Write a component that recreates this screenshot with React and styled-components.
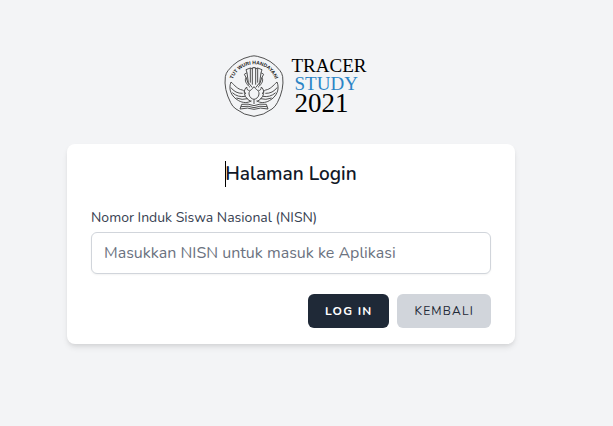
import React, { useState } from "react";
import styled, { createGlobalStyle } from "styled-components";

const GlobalStyle = createGlobalStyle`
  *, *::before, *::after {
    box-sizing: border-box;
  }
  body {
    margin: 0;
    background-color: #f3f4f6;
    color: #111827;
    font-family: Nunito, Lato, "Open Sans", sans-serif;
    font-size: 16px;
    line-height: 24px;
  }
`;

const Container = styled.main`
  display: flex;
  flex-direction: column;
  align-items: center;
  min-height: 100vh;
  padding: 55px 31px 24px 0;
`;

const Brand = styled.a`
  display: flex;
  align-items: flex-start;
  gap: 8px;
  margin-left: 8px;
  color: #000000;
  text-decoration: none;
`;

const BrandText = styled.div`
  display: flex;
  flex-direction: column;
  font-family: "Liberation Serif", serif;
  font-size: 19px;
  line-height: 18px;
  padding-top: 2px;
`;

const BrandLine = styled.span`
  padding-left: ${(props) => (props.$indent ? "3px" : "0")};
  color: ${(props) => props.$color || "#000000"};
`;

const Year = styled(BrandLine)`
  font-size: 27px;
  line-height: 21px;
`;

const Card = styled.form`
  width: 100%;
  max-width: 448px;
  margin-top: 27px;
  padding: 16px 24px;
  background-color: #ffffff;
  border-radius: 8px;
  box-shadow: 0 4px 6px -1px rgb(0 0 0 / 10%), 0 2px 4px -1px rgb(0 0 0 / 6%);
`;

const Title = styled.h1`
  position: relative;
  width: fit-content;
  margin: 0 auto 18px;
  font-size: 19px;
  font-weight: 600;
  line-height: 28px;
  &::before {
    content: "";
    position: absolute;
    top: 1px;
    left: 0;
    width: 1px;
    height: 26px;
    background-color: #000000;
  }
`;

const Label = styled.label`
  display: block;
  font-size: 14px;
  line-height: 24px;
  color: #374151;
`;

const Input = styled.input`
  display: block;
  width: 100%;
  height: 42px;
  margin-top: 2px;
  padding: 8px 12px;
  font: inherit;
  color: #111827;
  background-color: #ffffff;
  border: 1px solid #d1d5db;
  border-radius: 6px;
  box-shadow: 0 1px 2px 0 rgb(0 0 0 / 5%);
  outline: none;
  &::placeholder {
    color: #6b7280;
    opacity: 1;
  }
`;

const Actions = styled.div`
  display: flex;
  justify-content: flex-end;
  gap: 8px;
  margin-top: 20px;
`;

const Button = styled.button`
  height: 34px;
  padding: 0 16px;
  border: 1px solid transparent;
  border-radius: 6px;
  font-family: inherit;
  font-size: 12px;
  font-weight: ${(props) => (props.$primary ? 700 : 400)};
  line-height: 16px;
  letter-spacing: 0.1em;
  text-transform: uppercase;
  cursor: pointer;
  color: ${(props) => (props.$primary ? "#ffffff" : "#1f2937")};
  background-color: ${(props) => (props.$primary ? "#1f2937" : "#d1d5db")};
`;

const Emblem = () => (
  <svg width="60" height="62" viewBox="24 15 180 186" fill="none" stroke="#444444" strokeWidth="2.8" aria-hidden="true">
    <path d="M104 19Q114 16 124 19Q166 28 192 62Q198 69 200 80Q205 118 184 158Q178 170 168 177Q143 196 114 199Q84 196 60 177Q49 170 44 158Q23 118 28 80Q30 69 36 62Q62 28 104 19Z" />
    <path id="motto" d="M46 111A68 68 0 0 1 182 111" stroke="none" />
    <text fill="#222222" stroke="none" fontFamily="Liberation Sans" fontWeight="700" fontSize="15">
      <textPath href="#motto" startOffset="50%" textAnchor="middle">
        TUT WURI HANDAYANI
      </textPath>
    </text>
    {/* wings */}
    <path d="M45 96C36 118 46 140 68 152C80 159 96 160 106 152M45 96C56 106 65 118 79 120C84 121 87 127 89 132M44 112Q58 131 80 130M49 128Q66 143 88 139M61 144Q79 151 95 146" />
    <path d="M183 96C192 118 182 140 160 152C148 159 132 160 122 152M183 96C172 106 163 118 149 120C144 121 141 127 139 132M184 112Q170 131 148 130M179 128Q162 143 140 139M167 144Q149 151 133 146" />
    {/* tail feathers */}
    <path d="M102 112C90 101 85 92 90 82L85 73L93 68L90 59L103 54V98M126 112C138 101 143 92 138 82L143 73L135 68L138 59L125 54V98M109 52V104M119 52V104M103 54L109 57L114 51L119 57L125 54M93 68L97 98L109 113M135 68L131 98L119 113M90 82L98 104M138 82L130 104" />
    {/* lotus */}
    <path d="M114 110C110 119 98 120 99 132C100 142 107 147 114 148C121 147 128 142 129 132C130 120 118 119 114 110ZM92 111Q80 122 88 139Q94 150 106 155M136 111Q148 122 140 139Q134 150 122 155M92 111Q93 123 101 121M136 111Q135 123 127 121M114 148V162" />
    {/* book */}
    <path d="M77 163Q97 160 114 167Q131 160 151 163L156 177Q132 171 114 178Q96 171 72 177ZM75 170Q98 166 114 173Q130 166 153 170" />
  </svg>
);

const App = () => {
  const [nisn, setNisn] = useState("");

  return (
    <>
      <GlobalStyle />
      <Container>
        <Brand href="/">
          <Emblem />
          <BrandText>
            <BrandLine>TRACER</BrandLine>
            <BrandLine $indent $color="#2b84c6">
              STUDY
            </BrandLine>
            <Year $indent>2021</Year>
          </BrandText>
        </Brand>
        <Card onSubmit={(e) => e.preventDefault()}>
          <Title>Halaman Login</Title>
          <Label htmlFor="nisn">Nomor Induk Siswa Nasional (NISN)</Label>
          <Input
            id="nisn"
            type="text"
            placeholder="Masukkan NISN untuk masuk ke Aplikasi"
            value={nisn}
            onChange={(e) => setNisn(e.target.value)}
          />
          <Actions>
            <Button type="submit" $primary>
              Log in
            </Button>
            <Button type="button">Kembali</Button>
          </Actions>
        </Card>
      </Container>
    </>
  );
};

export default App;
